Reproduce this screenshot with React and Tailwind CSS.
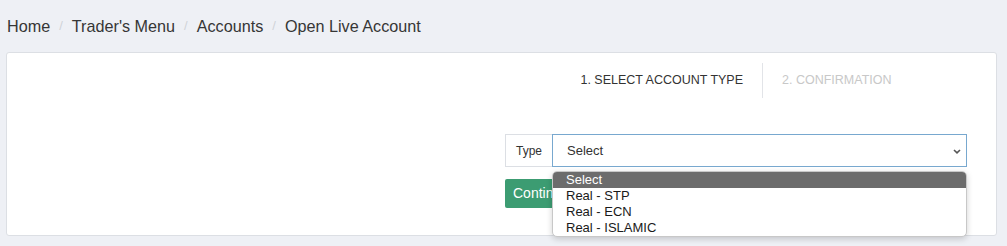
import React from 'react';

const crumbs = ["Home", "Trader's Menu", "Accounts", "Open Live Account"];
const options = ["Select", "Real - STP", "Real - ECN", "Real - ISLAMIC"];

const App = () => {
  return (
    <div className="w-[1007px] h-[246px] bg-[#eef0f5] overflow-hidden font-['Liberation_Sans',Arial,sans-serif]">
      {/* breadcrumb */}
      <div className="h-[52px] flex items-center pl-[7px] text-[16.2px] text-[#363636]">
        {crumbs.map((c, i) => (
          <React.Fragment key={c}>
            {i > 0 && <span className="px-[9px] text-[#d0d3d8] text-[13px]">/</span>}
            <span>{c}</span>
          </React.Fragment>
        ))}
      </div>

      {/* card */}
      <div className="ml-[6px] w-[991px] h-[184px] bg-white border border-[#dcdfe4] rounded-[3px] flex justify-end">
        <div className="w-[462px] mr-[29px]">
          {/* steps */}
          <div className="flex justify-center mt-[10px] text-[12.5px]">
            <div className="px-[19px] h-[35px] flex items-center border-r border-[#e2e4e8] text-[#333]">
              1. SELECT ACCOUNT TYPE
            </div>
            <div className="px-[19px] h-[35px] flex items-center text-[#c8c8c8]">
              2. CONFIRMATION
            </div>
          </div>

          {/* form */}
          <div className="relative mt-[36px] flex h-[33px]">
            <div className="w-[47px] flex items-center justify-center border border-[#dcdfe4] border-r-0 text-[12px] text-[#333]">
              Type
            </div>
            <div className="flex-1 flex items-center justify-between border border-[#78a8cf] pl-[14px] pr-[4px] text-[13px] text-[#333]">
              <span>Select</span>
              <svg width="10" height="10" viewBox="0 0 10 10">
                <path d="M2 4 L5 6.8 L8 4" fill="none" stroke="#555" strokeWidth="1.6" />
              </svg>
            </div>

            {/* open dropdown */}
            <div className="absolute left-[47px] right-0 top-[37px] z-10 bg-white border border-[#c8c8c8] rounded-[5px] shadow-[0_2px_6px_rgba(0,0,0,0.18)] overflow-hidden text-[13px] leading-[16px]">
              {options.map((o, i) => (
                <div
                  key={o}
                  className={`pl-[13px] h-[16px] ${i === 0 ? "bg-[#6c6c6c] text-white" : "text-[#1a1a1a]"}`}
                >
                  {o}
                </div>
              ))}
            </div>
          </div>

          <button className="mt-[12px] h-[29px] px-[8px] bg-[#3c9c72] text-white text-[14px] rounded-[2px]">
            Continue
          </button>
        </div>
      </div>
    </div>
  );
};

export default App;
